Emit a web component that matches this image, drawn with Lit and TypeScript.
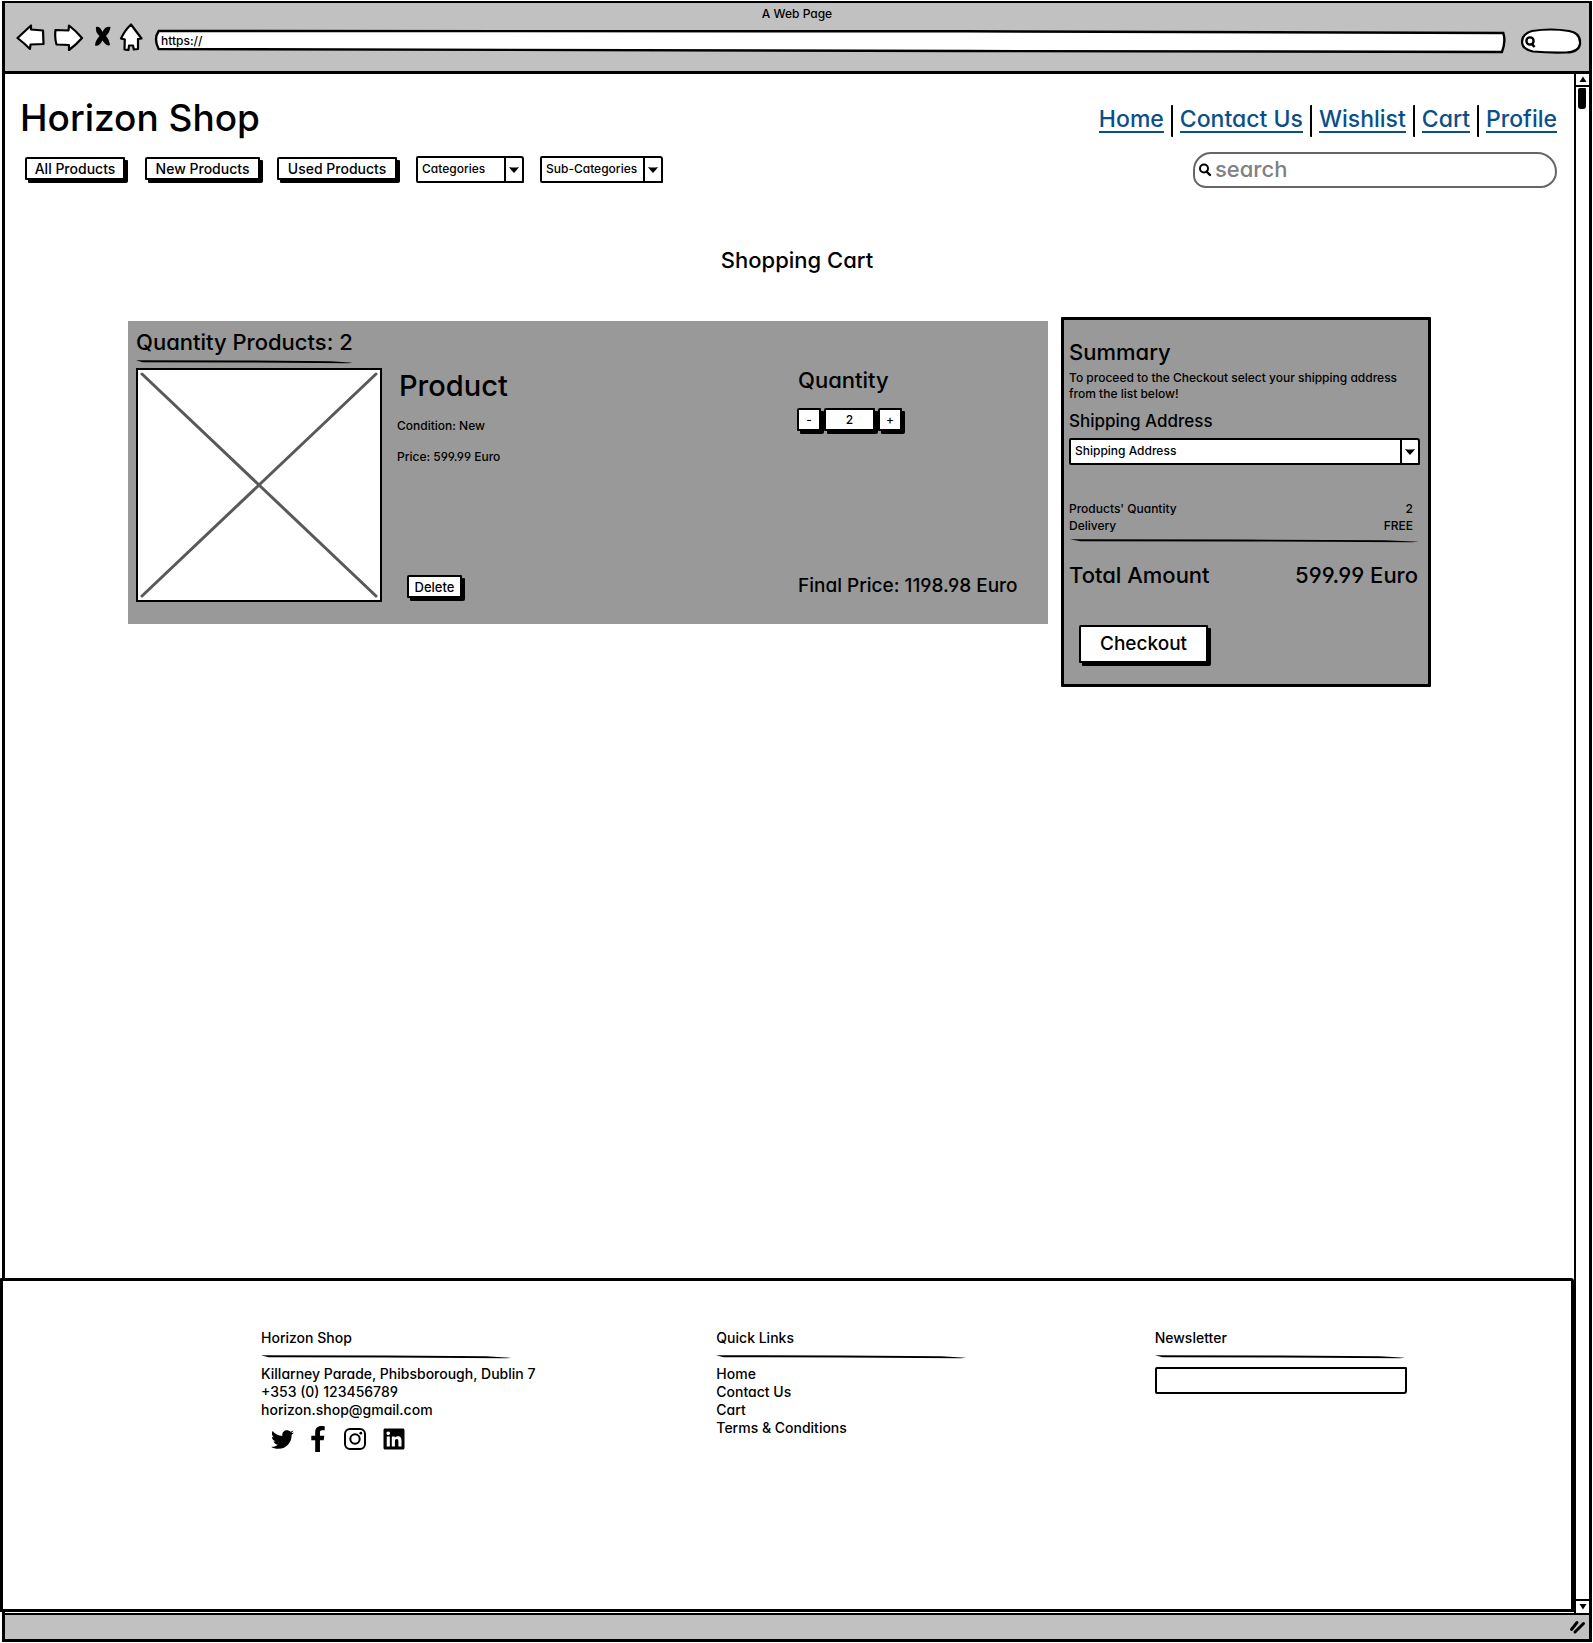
import { LitElement, html, svg, css } from "lit";
import { customElement, property, state } from "lit/decorators.js";

const caret = svg`<path d="M2 3 Q7 4 12 3 Q10 6 7 9 Q4 6 2 3Z" fill="#000" />`;

/* Hand-drawn horizontal rule that tapers at both ends. */
@customElement("sketch-rule")
export class SketchRule extends LitElement {
  static styles = css`
    :host { display: block; height: 4px; }
    .line { display: block; width: 100%; height: 4px; }
  `;
  render() {
    return html`<svg class="line" viewBox="0 0 100 4" preserveAspectRatio="none" aria-hidden="true">
      <path d="M0 0.2 L50 0.5 L90 1.2 L100 2.8 L98 3.2 L50 2.5 L3 2.2 Z" fill="#000" />
    </svg>`;
  }
}

/* Labelled drop-down with a separate arrow cell. */
@customElement("sketch-select")
export class SketchSelect extends LitElement {
  @property() label = "";
  static styles = css`
    :host { display: block; }
    .box {
      display: grid;
      grid-template-columns: minmax(0, 1fr) 18px;
      height: 27px;
      box-sizing: border-box;
      border: 2px solid #000;
      border-radius: 2px 3px 1px 2px;
      background: #fff;
    }
    .field {
      grid-area: 1 / 1 / 2 / 3;
      appearance: none;
      border: 0;
      margin: 0;
      padding: 0 19px 2px 4px;
      background: transparent;
      color: #000;
      font: inherit;
      font-size: 12px;
    }
    .cell {
      grid-area: 1 / 2 / 2 / 3;
      display: flex;
      align-items: center;
      justify-content: center;
      border-left: 2px solid #000;
      pointer-events: none;
    }
  `;
  render() {
    return html`<div class="box">
      <select class="field" aria-label=${this.label}><option>${this.label}</option></select>
      <span class="cell"><svg width="14" height="12" viewBox="0 0 14 12" aria-hidden="true">${caret}</svg></span>
    </div>`;
  }
}

@customElement("app-root")
export class AppRoot extends LitElement {
  @state() private quantity = 2;

  static styles = css`
    :host {
      display: block;
      font-family: Inter, "Open Sans", sans-serif;
      font-feature-settings: "cv11", "cv04";
      font-size: 12px;
      font-weight: 500;
      line-height: 16px;
      color: #000;
    }
    * { box-sizing: border-box; }
    h1, h2, h3, p, ul, dl, dd { margin: 0; padding: 0; font-weight: 500; }
    ul { list-style: none; }
    button, input { font: inherit; font-feature-settings: inherit; color: #000; margin: 0; }
    button { cursor: pointer; }

    .page { min-height: 100vh; padding: 1px 1px 1px 2px; display: flex; background: #fff; }
    .window { flex: 1; min-width: 0; display: flex; flex-direction: column; border: 3px solid #000; border-top-width: 2px; }

    .chrome { height: 71px; background: #c1c1c1; border-bottom: 3px solid #000; }
    .caption { padding-top: 3px; text-align: center; }
    .toolbar { display: flex; align-items: flex-start; padding: 1px 8px 0 11px; }
    .tool { border: 0; padding: 0; background: none; height: 28px; flex: none; }
    .tool svg { display: block; }
    .address { flex: 1; height: 24px; display: grid; margin: 7px 15px 0 10px; }
    .address svg { grid-area: 1 / 1; width: 100%; height: 24px; overflow: visible; }
    .address input { grid-area: 1 / 1; width: 100%; border: 0; background: none; padding: 0 5px 3px; font-size: 12px; outline: 0; }
    .finder { width: 60px; height: 26px; display: grid; margin-top: 5px; }
    .finder svg { grid-area: 1 / 1; overflow: visible; }
    .finder input { grid-area: 1 / 1; width: 100%; border: 0; background: none; padding: 0 8px 0 16px; outline: 0; }

    .view { flex: 1; display: flex; }
    .content { flex: 1; min-width: 0; display: flex; flex-direction: column; }
    .scroll { width: 15px; border-left: 2px solid #000; display: flex; flex-direction: column; justify-content: space-between; }
    .step { display: flex; align-items: center; justify-content: center; width: 100%; height: 13px; padding: 0; border: 0; border-bottom: 2px solid #000; background: #fff; }
    .step.down { border-bottom: 0; border-top: 2px solid #000; margin-bottom: 1px; }
    .thumb { width: 8px; height: 21px; margin: 1px 0 0 2px; background: #000; border-radius: 2px 1px 3px 3px; }

    .header { display: grid; grid-template-columns: 1fr auto; padding: 20px 17px 0 15px; row-gap: 6px; align-items: start; }
    .brand { font-size: 37px; line-height: 48px; }
    .nav { display: flex; justify-content: flex-end; padding-top: 11px; }
    .nav a { padding: 1px 0 0; margin: 0 7px; color: #0b4f8a; font-size: 23px; line-height: 26px; height: 28px; border-bottom: 2px solid #0b4f8a; }
    .nav a, .links a, .social a { text-decoration: none; }
    .nav li { display: flex; height: 32px; }
    .nav li + li { border-left: 2px solid #000; border-radius: 1px; }
    .nav li:last-child a { margin-right: 0; }
    .filters { display: flex; align-items: center; padding: 8px 0 0 5px; }
    .push {
      border: 2px solid #000;
      border-radius: 2px 1px 2px 1px;
      background: #fff;
      box-shadow: 3px 3px 0 #000;
      padding: 0;
      height: 23px;
      font-size: 14px;
      line-height: 16px;
      white-space: nowrap;
    }
    .filters .push { width: 100px; margin: 0 20px 2px 0; }
    .filters .push.mid { width: 115px; margin-right: 17px; }
    .filters .push.wide { width: 120px; margin-right: 19px; }
    .categories { width: 108px; margin-right: 16px; }
    .subcategories { width: 123px; }
    .search { display: flex; align-items: center; width: 364px; height: 36px; justify-self: end; border: 2px solid #666; border-radius: 20px 22px 18px 14px; padding-left: 3px; margin-top: 4px; }
    .search input { flex: 1; min-width: 0; border: 0; background: none; outline: 0; font-size: 22px; padding: 0 8px 2px 3px; }
    .search input::placeholder { color: #808085; opacity: 1; }

    .title { font-size: 22px; line-height: 28px; text-align: center; padding: 58px 0 0 15px; }
    .cart { display: grid; grid-template-columns: minmax(0, 1fr) 370px; gap: 13px; align-items: start; padding: 43px 143px 40px 123px; }
    .panel { background: #999; margin-top: 4px; padding: 7px 8px 22px; }
    .count { display: inline-block; }
    .count h3, .quantity h3, .summary h3 { font-size: 22px; line-height: 28px; }
    .count sketch-rule { margin-top: 4px; }
    .item { display: grid; grid-template-columns: 246px minmax(0, 1fr) 243px; margin-top: 4px; }
    .photo { width: 100%; height: 234px; display: block; border: 2px solid #000; background: #fff; }
    .details, .quantity { display: flex; flex-direction: column; align-items: flex-start; }
    .details { padding-left: 15px; }
    .details h2 { font-size: 29px; line-height: 36px; padding-left: 2px; }
    .details p { padding-top: 15px; }
    .details h2 + p { padding-top: 14px; }
    .details .push { width: 55px; margin: auto 0 4px 10px; font-size: 13px; }
    .quantity h3 { padding: 0 0 0 1px; line-height: 24px; }
    .stepper { display: flex; gap: 3px; padding-top: 16px; }
    .stepper .push { width: 24px; font-size: 12px; text-align: center; }
    .stepper input.push { width: 51px; }
    .quantity .final { font-size: 19px; line-height: 24px; margin: auto 0 4px 1px; white-space: nowrap; }

    .summary { background: #999; border: 3px solid #000; border-radius: 1px; min-height: 370px; padding: 18px 8px 19px 5px; display: flex; flex-direction: column; }
    .summary p { margin-top: 4px; }
    .summary h4 { margin: 7px 0 5px; font-size: 17px; font-weight: 500; line-height: 24px; }
    .facts { margin-top: 35px; }
    .facts div { display: flex; justify-content: space-between; padding-right: 7px; line-height: 17px; }
    .summary sketch-rule { margin: 5px 1px 0; }
    .total { display: flex; justify-content: space-between; font-size: 22px; line-height: 28px; margin: 18px 2px 0 0; }
    .summary .push { width: 129px; height: 38px; font-size: 19px; margin: 36px 0 0 10px; }

    .footer { margin: auto 0 1px -5px; min-height: 334px; border: 3px solid #000; border-radius: 1px 3px 0 0; background: #fff; display: grid; grid-template-columns: 455fr 438fr 416fr; padding: 48px 0 40px 258px; font-size: 14px; line-height: 18px; position: relative; }
    .column h3 { font-size: 14px; }
    .column sketch-rule { width: 250px; margin: 8px 0 6px; }
    .links a { color: #000; }
    .social { display: flex; align-items: center; height: 26px; margin: 7px 0 0 10px; gap: 17px; }
    .social svg { display: block; }
    .social li:nth-child(3) { margin-left: 2px; }
    .mail { display: block; width: 252px; height: 27px; border: 2px solid #000; border-radius: 2px 1px 3px 2px; padding: 0 6px; margin-top: 8px; background: #fff; }

    .status { height: 26px; border-top: 2px solid #000; background: #c1c1c1; display: flex; justify-content: flex-end; align-items: center; padding-right: 2px; }
  `;

  private setQuantity(step: number) {
    this.quantity = Math.max(1, this.quantity + step);
  }

  render() {
    return html`
      <div class="page"><div class="window">
        <div class="chrome">
          <div class="caption">A Web Page</div>
          <div class="toolbar">
            <button class="tool" aria-label="Back"><svg width="36" height="28" viewBox="16 23 36 28"><path d="M17.500 38 L31 25.500 L31 29.500 L43 30.500 L43.500 44 L30.500 44.500 L30 49 Q24 43 17.500 38Z" fill="#fff" stroke="#000" stroke-width="2.200" stroke-linejoin="round"/></svg></button>
            <button class="tool" aria-label="Forward"><svg width="40" height="28" viewBox="52 23 40 28"><path d="M55.500 30 L68.500 30.500 L69 25.500 Q76 31 82 38 Q77 44 69 50 L69 45 L56.500 44.500 Q54.500 38 55.500 30Z" fill="#fff" stroke="#000" stroke-width="2.200" stroke-linejoin="round"/></svg></button>
            <button class="tool" aria-label="Stop"><svg width="26" height="28" viewBox="92 23 26 28"><path d="M96 27 Q100 26 102.500 32 Q105 26 110.500 27 Q110 32 106 36 Q109 39 110 45 Q107 47 102.500 40.500 Q99 47 95 45.500 Q95 41 99.500 36 Q95 32 96 27Z"/></svg></button>
            <button class="tool" aria-label="Home"><svg width="28" height="28" viewBox="118 23 28 28"><path d="M131 24.500 L141.500 38.500 L138 39 L138 49 L133.800 49.500 L133 45.500 L129 45.500 L128.500 50 L124.500 49.500 L124.800 39.500 L121 38.500 Q125 30 131 24.500Z" fill="#fff" stroke="#000" stroke-width="2.200" stroke-linejoin="round"/></svg></button>
            <div class="address">
              <svg viewBox="0 0 100 24" preserveAspectRatio="none" aria-hidden="true"><path d="M0.200 1 L60 1.300 L99.800 3 Q100 12 99.700 22 L60 21 L0.200 19 Q-0.200 9 0.200 1Z" fill="#fff" stroke="#000" stroke-width="2.400" vector-effect="non-scaling-stroke"/></svg>
              <input aria-label="Address" value="https://" />
            </div>
            <div class="finder">
              <svg width="60" height="26" viewBox="0 0 60 26" aria-hidden="true"><path d="M11 3 Q30 0 48 3 Q60 5 59 16 Q58 24 45 24.500 Q28 25 12 23.500 Q1 21 1 14 Q1 6 11 3Z" fill="#fff" stroke="#000" stroke-width="2.200"/><circle cx="9" cy="13" r="3.600" fill="none" stroke="#000" stroke-width="2.400"/><path d="M11 16 L13.500 19" stroke="#000" stroke-width="2.600"/></svg>
              <input aria-label="Web search" />
            </div>
          </div>
        </div>

        <div class="view">
          <div class="content">
            <header class="header">
              <h1 class="brand">Horizon Shop</h1>
              <nav><ul class="nav">
                ${["Home", "Contact Us", "Wishlist", "Cart", "Profile"].map((t) => html`<li><a href="#">${t}</a></li>`)}
              </ul></nav>
              <div class="filters">
                <button class="push">All Products</button>
                <button class="push mid">New Products</button>
                <button class="push wide">Used Products</button>
                <sketch-select class="categories" label="Categories"></sketch-select>
                <sketch-select class="subcategories" label="Sub-Categories"></sketch-select>
              </div>
              <label class="search">
                <svg width="14" height="14" viewBox="0 0 14 14" aria-hidden="true"><circle cx="6" cy="5.500" r="4" fill="none" stroke="#000" stroke-width="2"/><path d="M8.500 8.500 L12 12" stroke="#000" stroke-width="2.400" stroke-linecap="round"/></svg>
                <input placeholder="search" aria-label="Search" />
              </label>
            </header>

            <h2 class="title">Shopping Cart</h2>
            <main class="cart">
              <section class="panel">
                <div class="count"><h3>Quantity Products: ${this.quantity}</h3><sketch-rule></sketch-rule></div>
                <div class="item">
                  <svg class="photo" viewBox="0 0 242 230" preserveAspectRatio="none" role="img" aria-label="Product image"><path d="M4 4 L238 226 M238 4 L4 226" stroke="#595959" stroke-width="3" stroke-linecap="round"/></svg>
                  <div class="details">
                    <h2>Product</h2>
                    <p>Condition: New</p>
                    <p>Price: 599.99 Euro</p>
                    <button class="push">Delete</button>
                  </div>
                  <div class="quantity">
                    <h3>Quantity</h3>
                    <div class="stepper">
                      <button class="push" aria-label="Decrease quantity" @click=${() => this.setQuantity(-1)}>-</button>
                      <input class="push" aria-label="Quantity" .value=${String(this.quantity)} />
                      <button class="push" aria-label="Increase quantity" @click=${() => this.setQuantity(1)}>+</button>
                    </div>
                    <p class="final">Final Price: 1198.98 Euro</p>
                  </div>
                </div>
              </section>

              <section class="summary">
                <h3>Summary</h3>
                <p>To proceed to the Checkout select your shipping address from the list below!</p>
                <h4>Shipping Address</h4>
                <sketch-select label="Shipping Address"></sketch-select>
                <dl class="facts">
                  <div><dt>Products' Quantity</dt><dd>${this.quantity}</dd></div>
                  <div><dt>Delivery</dt><dd>FREE</dd></div>
                </dl>
                <sketch-rule></sketch-rule>
                <div class="total"><span>Total Amount</span><span>599.99 Euro</span></div>
                <button class="push">Checkout</button>
              </section>
            </main>

            <footer class="footer">
              <div class="column">
                <h3>Horizon Shop</h3>
                <sketch-rule></sketch-rule>
                <p>Killarney Parade, Phibsborough, Dublin 7</p>
                <p>+353 (0) 123456789</p>
                <p>horizon.shop@gmail.com</p>
                <ul class="social">
                  <li><a href="#" aria-label="Twitter"><svg width="23" height="23" viewBox="0 0 512 512"><path d="M459.370 151.716c.325 4.548.325 9.097.325 13.645 0 138.720-105.583 298.558-298.558 298.558-59.452 0-114.680-17.219-161.137-47.106 8.447.974 16.568 1.299 25.340 1.299 49.055 0 94.213-16.568 130.274-44.832-46.132-.975-84.792-31.188-98.112-72.772 6.498.974 12.995 1.624 19.818 1.624 9.421 0 18.843-1.300 27.614-3.573-48.081-9.747-84.143-51.980-84.143-102.985v-1.299c13.969 7.797 30.214 12.670 47.431 13.319-28.264-18.843-46.781-51.005-46.781-87.391 0-19.492 5.197-37.360 14.294-52.954 51.655 63.675 129.300 105.258 216.365 109.807-1.624-7.797-2.599-15.918-2.599-24.040 0-57.828 46.782-104.934 104.934-104.934 30.213 0 57.502 12.670 76.670 33.137 23.715-4.548 46.456-13.320 66.599-25.340-7.798 24.366-24.366 44.833-46.132 57.827 21.117-2.273 41.584-8.122 60.426-16.243-14.292 20.791-32.161 39.308-52.628 54.253z"/></svg></a></li>
                  <li><a href="#" aria-label="Facebook"><svg width="14" height="26" viewBox="0 0 264 512"><path d="M215.800 85H264V3.600C255.700 2.500 227.100 0 193.800 0 124.300 0 76.700 42.400 76.700 120.300V192H0v91h76.700v229h94V283h73.600l11.700-91h-85.300v-62.700c0-26.300 7.300-44.300 45.100-44.300z"/></svg></a></li>
                  <li><a href="#" aria-label="Instagram"><svg width="22" height="24" viewBox="0 0 22 24"><rect x="1" y="2" width="20" height="20" rx="5" fill="none" stroke="#000" stroke-width="2"/><circle cx="11" cy="12" r="4.700" fill="none" stroke="#000" stroke-width="2"/><circle cx="16.800" cy="6.200" r="1.400"/></svg></a></li>
                  <li><a href="#" aria-label="LinkedIn"><svg width="22" height="24" viewBox="0 0 448 512"><path d="M416 32H31.900C14.300 32 0 46.500 0 64.300v383.400C0 465.500 14.300 480 31.900 480H416c17.600 0 32-14.500 32-32.300V64.300c0-17.800-14.400-32.300-32-32.300zM135.400 416H69V202.200h66.500V416zm-33.200-243c-21.300 0-38.500-17.300-38.500-38.500S80.900 96 102.200 96c21.200 0 38.500 17.300 38.500 38.500 0 21.300-17.200 38.500-38.500 38.500zm282.100 243h-66.400V312c0-24.800-.5-56.700-34.500-56.700-34.600 0-39.900 27-39.900 54.900V416h-66.400V202.200h63.700v29.200h.9c8.900-16.800 30.600-34.500 62.900-34.500 67.200 0 79.700 44.300 79.700 101.900V416z"/></svg></a></li>
                </ul>
              </div>
              <nav class="column">
                <h3>Quick Links</h3>
                <sketch-rule></sketch-rule>
                <ul class="links">
                  ${["Home", "Contact Us", "Cart", "Terms & Conditions"].map((t) => html`<li><a href="#">${t}</a></li>`)}
                </ul>
              </nav>
              <div class="column">
                <h3><label for="mail">Newsletter</label></h3>
                <sketch-rule></sketch-rule>
                <input class="mail" id="mail" type="email" />
              </div>
            </footer>
          </div>
          <div class="scroll">
            <div>
              <button class="step" aria-label="Scroll up"><svg width="8" height="7" viewBox="0 0 8 7"><path d="M4 0.500 L7.500 6 L0.500 6Z"/></svg></button>
              <div class="thumb"></div>
            </div>
            <button class="step down" aria-label="Scroll down"><svg width="8" height="7" viewBox="0 0 8 7"><path d="M0.500 1 L7.500 1 L4 6.500Z"/></svg></button>
          </div>
        </div>
        <div class="status"><svg width="18" height="16" viewBox="0 0 18 16" aria-hidden="true"><path d="M2.500 10.500 L8 3.500 M6 13 L14.500 4.500" stroke="#000" stroke-width="3" stroke-linecap="round"/></svg></div>
      </div></div>
    `;
  }
}
